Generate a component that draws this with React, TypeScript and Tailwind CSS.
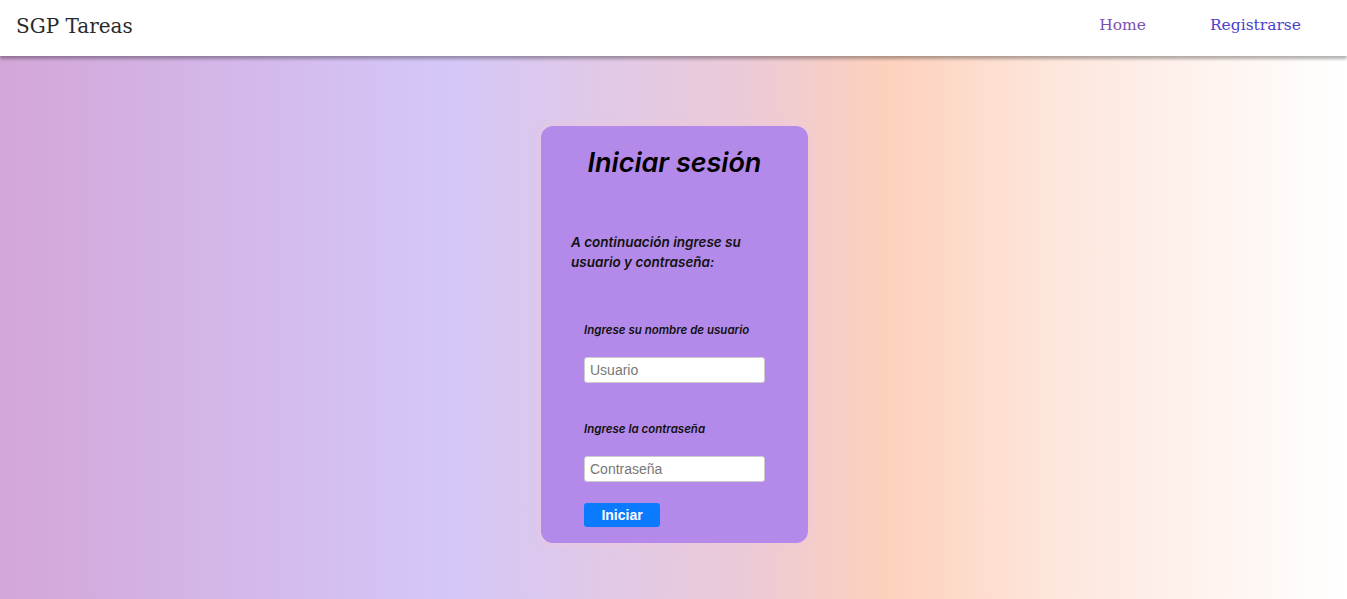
export default function App() {
  return (
    <div className="flex min-h-[599px] flex-col">
      <header className="relative z-10 flex h-[56px] items-center justify-between bg-white pb-[5px] pl-4 pr-[46px] shadow-[0_3px_3px_rgba(0,0,0,0.3)]">
        <span className="text-[20px] font-light text-[#2a2a2a] [font-family:'DejaVu_Serif','Liberation_Serif',serif]">
          SGP Tareas
        </span>
        <nav className="flex items-center gap-[64px] text-[15.5px] [font-family:'DejaVu_Serif','Liberation_Serif',serif]">
          <a className="text-[#7a4fb0]">Home</a>
          <a className="text-[#4a3fcc]">Registrarse</a>
        </nav>
      </header>

      <main className="flex flex-1 justify-center bg-[linear-gradient(90deg,#d3a6d8_0%,#d4c7f8_33%,#ebcad8_55%,#fdd1bc_66%,#fde6dc_78%,#ffffff_100%)] pt-[70px] pb-[56px] pl-[2px]">
        <div className="flex w-[267px] flex-col rounded-[12px] bg-[#b38ae9] pt-[20px] pb-[12px] shadow-[0_0_10px_rgba(240,200,220,0.9)] [font-family:Inter,'Open_Sans',sans-serif]">
          <h1 className="text-center text-[27px] leading-[34px] font-semibold italic text-black">
            Iniciar sesión
          </h1>
          <p className="mt-[52px] px-[30px] text-[13.5px] leading-[20px] font-semibold italic text-[#111]">
            A continuación ingrese su usuario y contraseña:
          </p>
          <form className="mt-[50px] flex flex-col px-[43px]">
            <label className="text-[11.5px] leading-[16px] font-semibold italic text-[#111]">
              Ingrese su nombre de usuario
            </label>
            <input
              placeholder="Usuario"
              className="mt-[19px] h-[26px] w-[181px] rounded-[3px] border border-[#ccc] bg-white px-[5px] text-[14px] text-black placeholder:text-[#777] [font-family:'Liberation_Sans',Arial,sans-serif]"
            />
            <label className="mt-[38px] text-[11.5px] leading-[16px] font-semibold italic text-[#111]">
              Ingrese la contraseña
            </label>
            <input
              type="password"
              placeholder="Contraseña"
              className="mt-[19px] h-[26px] w-[181px] rounded-[3px] border border-[#ccc] bg-white px-[5px] text-[14px] text-black placeholder:text-[#777] [font-family:'Liberation_Sans',Arial,sans-serif]"
            />
            <button
              type="button"
              className="mt-[21px] h-[24px] w-[76px] rounded-[3px] bg-[#0a7bff] text-[14px] font-bold text-white [font-family:'Liberation_Sans',Arial,sans-serif]"
            >
              Iniciar
            </button>
          </form>
        </div>
      </main>
    </div>
  );
}
